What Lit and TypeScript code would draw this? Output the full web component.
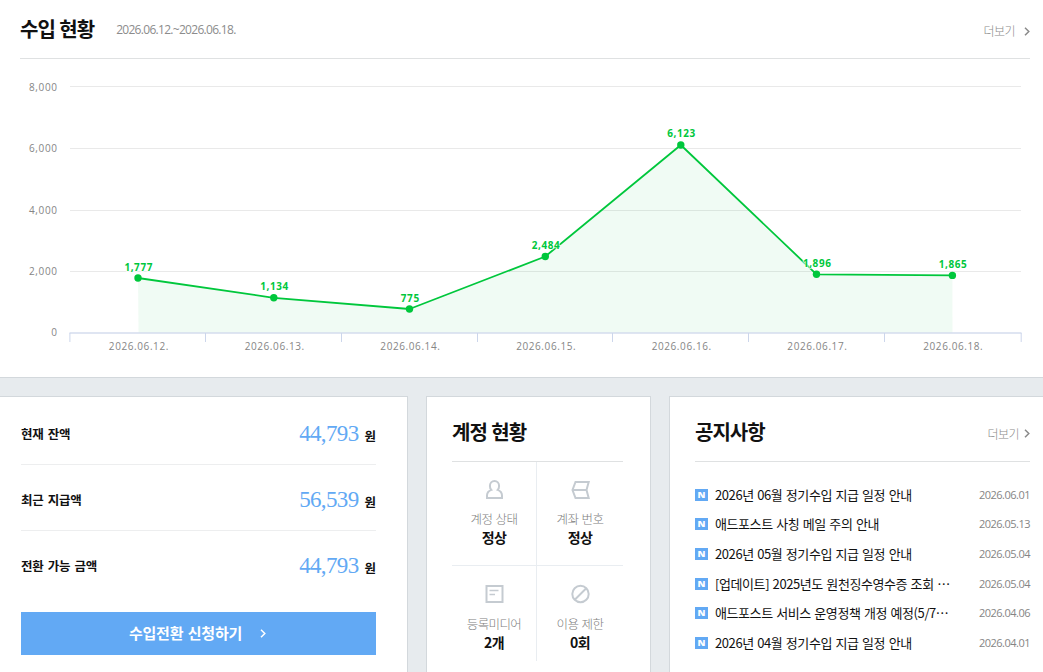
import { LitElement, html, svg, css } from "lit";
import { customElement, property } from "lit/decorators.js";

const chevron = html`<svg class="chev" width="6" height="9" viewBox="0 0 6 9">
  <path d="M1 0.800l3.800 3.700L1 8.200" fill="none" stroke="currentColor" stroke-width="1.500" />
</svg>`;

@customElement("income-chart")
class IncomeChart extends LitElement {
  static styles = css`
    :host { display: block; }
    svg { display: block; }
    .tick { font: 10px "Open Sans", "Noto Sans", sans-serif; fill: #858585; }
    .value { font: 700 10px "Open Sans", "Noto Sans", sans-serif; fill: #00c73c; stroke: #fff; stroke-width: 2px; stroke-opacity: 0.7; paint-order: stroke; }
  `;
  render() {
    const points = [
      { x: 138, y: 278, v: "1,777", d: "12", b: 271 },
      { x: 273.8, y: 297.8, v: "1,134", d: "13", b: 290 },
      { x: 409.5, y: 309, v: "775", d: "14", b: 302 },
      { x: 545.3, y: 256.5, v: "2,484", d: "15", b: 249 },
      { x: 680.8, y: 145, v: "6,123", d: "16", b: 137 },
      { x: 816.5, y: 274.3, v: "1,896", d: "17", b: 267 },
      { x: 952.4, y: 275.4, v: "1,865", d: "18", b: 268 },
    ];
    const line = points.map((p) => `${p.x},${p.y}`).join(" ");
    const rows = [
      { y: 86.5, t: "8,000", b: 91 },
      { y: 148.5, t: "6,000", b: 152 },
      { y: 210.5, t: "4,000", b: 214 },
      { y: 271.5, t: "2,000", b: 275 },
    ];
    return html`<svg width="1043" height="318" viewBox="0 59 1043 318">
      ${rows.map((r) => svg`<path d="M70 ${r.y}H1021" stroke="#e9e9e9" />
        <text class="tick" x="57" y=${r.b} text-anchor="end" textLength="28">${r.t}</text>`)}
      <text class="tick" x="57" y="336" text-anchor="end">0</text>
      <polygon points="138.5,333 ${line} 952.5,333" fill="#00bb3c" fill-opacity="0.06" />
      <path d="M69.5 333H1021.5" stroke="#d5dcee" stroke-width="1.4" />
      ${[69.9, 205.5, 341.5, 477.5, 612.5, 748.5, 884.5, 1021.2].map((x) => svg`<path d="M${x} 333V342" stroke="#ccd6eb" />`)}
      <polyline points=${line} fill="none" stroke="#00c73c" stroke-width="1.8" stroke-linejoin="round" />
      ${points.map((p) => svg`<circle cx=${p.x} cy=${p.y} r="3.7" fill="#00c73c" />
        <text class="tick" x=${p.x + 0.6} y="350" text-anchor="middle" textLength="59.5">2026.06.${p.d}.</text>
        <text class="value" x=${p.x + 0.4} y=${p.b} text-anchor="middle" textLength=${p.v.length > 3 ? 28 : 18.5}>${p.v}</text>`)}
    </svg>`;
  }
}

@customElement("balance-row")
class BalanceRow extends LitElement {
  @property() label = "";
  @property() amount = "";
  static styles = css`
    :host { display: flex; align-items: center; justify-content: space-between; color: #111; font-weight: 700; }
    .label { font-size: 12.5px; letter-spacing: -0.3px; word-spacing: 1.8px; }
    .sum { display: flex; align-items: baseline; gap: 6px; font-size: 12.5px; padding-top: 1px; }
    .num { font: 400 23px/30px "Liberation Serif", serif; color: #62a9f4; letter-spacing: -0.65px; }
  `;
  render() {
    return html`<span class="label">${this.label}</span>
      <span class="sum"><span class="num">${this.amount}</span>원</span>`;
  }
}

@customElement("app-root")
class AppRoot extends LitElement {
  static styles = css`
    * { box-sizing: border-box; }
    :host { display: flex; flex-direction: column; width: 1043px; height: 672px; overflow: hidden; background: #e7ebee;
      font-family: "Noto Sans CJK KR", sans-serif; color: #111; }
    h2 { margin: 0; font-size: 20px; line-height: 28px; font-weight: 700; letter-spacing: -1px; word-spacing: 1px; white-space: pre; }
    .income { height: 378px; flex: none; background: #fff; border-bottom: 1px solid #d3d8dc; }
    .head { display: flex; align-items: center; border-bottom: 1px solid #dfe1e2; }
    .income .head { height: 59px; margin: 0 13px 0 20px; }
    .range { margin: 2px 0 0 22px; font: 12px/16px "Open Sans", sans-serif; letter-spacing: -0.7px; color: #8c8c8c; }
    .more { margin-left: auto; display: flex; align-items: center; gap: 9px; font-size: 12px; line-height: 18px; letter-spacing: -0.5px; color: #8a8a8a; font-weight: 300; padding-top: 4px; }
    .notice .more { gap: 5px; }
    .chev { display: block; flex: none; }
    .cards { display: grid; grid-template-columns: 408px 225px 1fr; gap: 18px; margin-top: 18px; height: 290px; flex: none; }
    .card { background: #fff; border: 1px solid #d3d8dc; }
    .balance { border-left: 0; padding: 5px 31px 0 21px; }
    .balance balance-row { border-bottom: 1px solid #edeeef; height: 66px; padding-top: 3px; }
    .balance balance-row:first-child { height: 63px; padding-top: 0; }
    .balance balance-row:nth-child(3) { border: 0; }
    .cta { display: flex; align-items: center; justify-content: center; gap: 18px; height: 43px; margin-top: 15px; padding: 0 2px 2px 0; background: #62a9f4; color: #fff; font-weight: 700; font-size: 15px; letter-spacing: -0.2px; word-spacing: 1.2px; }
    .cta .chev { stroke-width: 2; margin-top: 2px; }
    .account { padding: 0 27px 0 25px; }
    .account .head, .notice .head { height: 65px; padding-top: 5px; }
    .grid { display: grid; grid-template-columns: 85px 86px; grid-template-rows: 104px 95px; }
    .cell { display: flex; flex-direction: column; align-items: center; padding-top: 18px; }
    .cell:nth-child(odd) { border-right: 1px solid #e9edf1; }
    .cell:nth-child(-n + 2) { border-bottom: 1px solid #e9edf1; }
    .cell svg { display: block; }
    .name { margin-top: 10px; font-size: 12.5px; line-height: 18px; font-weight: 300; color: #808080; letter-spacing: -0.6px; word-spacing: 1px; }
    .state { font-size: 14px; line-height: 19px; font-weight: 700; letter-spacing: -0.6px; }
    .cell:nth-child(n + 3) .name { margin-top: 11px; }
    .notice { border-right: 0; padding: 0 13px 0 25px; }
    .list { display: grid; grid-auto-rows: 29.7px; padding-top: 17.9px; }
    .item { display: flex; align-items: center; }
    .badge { width: 13px; height: 12px; margin-right: 7px; background: #62a9f4; color: #fff; font: 800 9.5px/12px "Open Sans", sans-serif; text-align: center; }
    .subject { font-size: 13px; line-height: 20px; font-weight: 400; letter-spacing: -0.42px; word-spacing: 1px; white-space: pre; }
    .date { margin-left: auto; font: 11px/16px "Open Sans", sans-serif; letter-spacing: -0.5px; color: #858585; }
  `;
  render() {
    const cells = [
      { n: "계정 상태", s: "정상", i: svg`<path d="M2 18V15.500C2 12.800 3.500 11 6.300 9.900C5.200 8.900 4.900 7.500 4.900 6.100C4.900 3.300 6.900 1.100 9.500 1.100S14.100 3.300 14.100 6.100C14.100 7.500 13.800 8.900 12.700 9.900C15.500 11 17 12.800 17 15.500V18Z" />` },
      { n: "계좌 번호", s: "정상", i: svg`<path d="M4.500 2H17.700L15.500 10L17.700 18H4.500L1.500 10ZM1.500 10H15.500" />` },
      { n: "등록미디어", s: "2개", i: svg`<path d="M1.500 2H17.500V18H1.500Z" /><path d="M4.500 6.500H13.500M4.500 10.500H10" stroke-width="1.500" />` },
      { n: "이용 제한", s: "0회", i: svg`<circle cx="9.500" cy="10" r="8.200" /><path d="M4 15.500L15 4.500" />` },
    ];
    const notices = [
      ["2026년 06월 정기수입 지급 일정 안내", "2026.06.01"],
      ["애드포스트 사칭 메일 주의 안내", "2026.05.13"],
      ["2026년 05월 정기수입 지급 일정 안내", "2026.05.04"],
      ["[업데이트] 2025년도 원천징수영수증 조회 ⋯", "2026.05.04"],
      ["애드포스트 서비스 운영정책 개정 예정(5/7⋯", "2026.04.06"],
      ["2026년 04월 정기수입 지급 일정 안내", "2026.04.01"],
    ];
    return html`
      <section class="income">
        <div class="head"><h2>수입 현황</h2><p class="range">2026.06.12.~2026.06.18.</p><span class="more">더보기 ${chevron}</span></div>
        <income-chart></income-chart>
      </section>
      <div class="cards">
        <section class="card balance">
          <balance-row label="현재 잔액" amount="44,793"></balance-row>
          <balance-row label="최근 지급액" amount="56,539"></balance-row>
          <balance-row label="전환 가능 금액" amount="44,793"></balance-row>
          <div class="cta">수입전환 신청하기 ${chevron}</div>
        </section>
        <section class="card account">
          <div class="head"><h2>계정 현황</h2></div>
          <div class="grid">
            ${cells.map((c) => html`<div class="cell">
              <svg width="19" height="20" viewBox="0 0 19 20" fill="none" stroke="#c5cbd1" stroke-width="2">${c.i}</svg>
              <span class="name">${c.n}</span><span class="state">${c.s}</span></div>`)}
          </div>
        </section>
        <section class="card notice">
          <div class="head"><h2>공지사항</h2><span class="more">더보기 ${chevron}</span></div>
          <div class="list">
            ${notices.map(([t, d]) => html`<div class="item"><span class="badge">N</span><span class="subject">${t}</span><span class="date">${d}</span></div>`)}
          </div>
        </section>
      </div>`;
  }
}
